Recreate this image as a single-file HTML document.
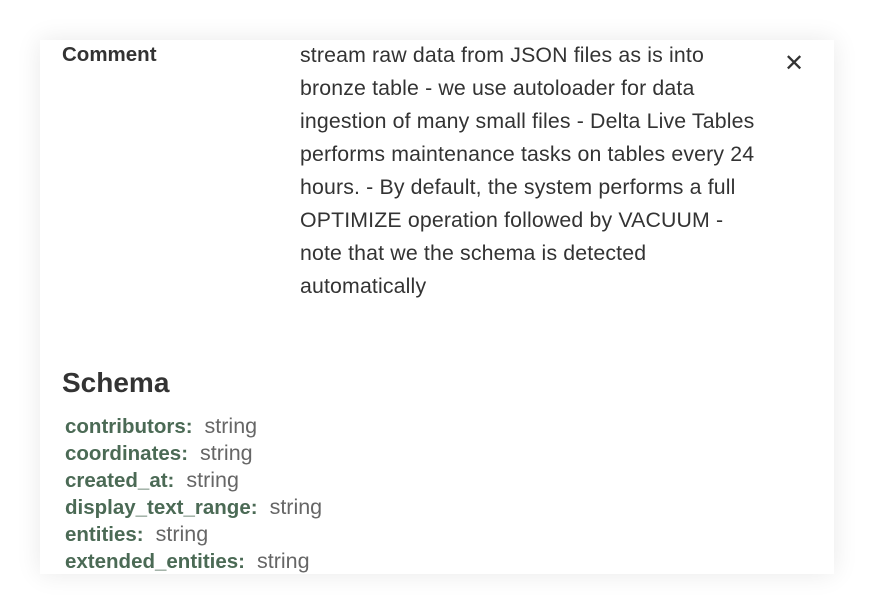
<!DOCTYPE html>
<html><head><meta charset="utf-8"><style>
body{margin:0;width:874px;height:614px;background:#fff;font-family:"Liberation Sans",sans-serif;overflow:hidden;position:relative}
.panel{position:absolute;left:40px;top:40px;width:794px;height:534px;background:#fff;box-shadow:0 0 24px rgba(0,0,0,0.09);overflow:hidden}
.lbl{position:absolute;left:22px;top:3px;font-size:20.5px;font-weight:bold;color:#333}
.desc{position:absolute;left:260px;top:-1px;white-space:nowrap;font-size:21.3px;line-height:33px;color:#333;letter-spacing:0.15px}
.x{position:absolute;left:744px;top:9px;font-size:24px;color:#333}
h2{position:absolute;left:22px;top:327px;margin:0;font-size:28px;font-weight:bold;color:#333}
.rows{position:absolute;left:25px;top:373px;font-size:20.5px;line-height:27px}
.k{color:#4b6a55;font-weight:bold;margin-right:12px}.v{color:#666;font-size:21.5px}
</style></head><body>
<div class="panel">
<div class="lbl">Comment</div>
<div class="desc">stream raw data from JSON files as is into<br>bronze table - we use autoloader for data<br>ingestion of many small files - Delta Live Tables<br>performs maintenance tasks on tables every 24<br>hours. - By default, the system performs a full<br>OPTIMIZE operation followed by VACUUM -<br>note that we the schema is detected<br>automatically</div>
<div class="x">✕</div>
<h2>Schema</h2>
<div class="rows">
<div><span class="k">contributors:</span><span class="v">string</span></div>
<div><span class="k">coordinates:</span><span class="v">string</span></div>
<div><span class="k">created_at:</span><span class="v">string</span></div>
<div><span class="k">display_text_range:</span><span class="v">string</span></div>
<div><span class="k">entities:</span><span class="v">string</span></div>
<div><span class="k">extended_entities:</span><span class="v">string</span></div>
</div>
</div>
</body></html>
